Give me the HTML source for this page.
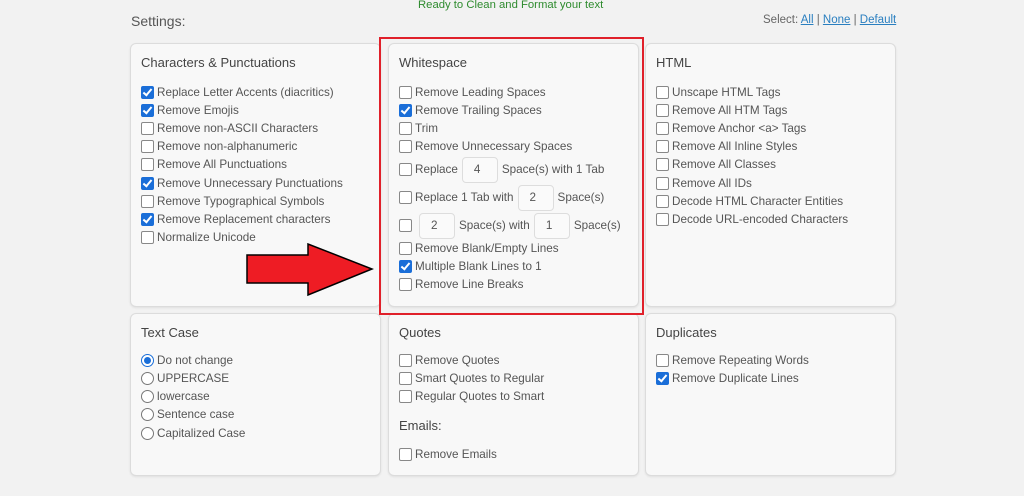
<!DOCTYPE html>
<html><head><meta charset="utf-8"><style>
body{margin:0;width:1024px;height:496px;background:#f2f2f2;font-family:"Liberation Sans",sans-serif;color:#555;position:relative;overflow:hidden}
.a{position:absolute;white-space:nowrap}
.p{position:absolute;background:#f8f8f8;border:1px solid #dcdcdc;border-radius:6px;box-shadow:0 1px 2px rgba(0,0,0,.08)}
.t{position:absolute;font-size:13px;color:#444}
.i{position:absolute;font-size:11.7px;color:#555;white-space:nowrap;height:14px;line-height:14px}
.cb{display:inline-block;width:13px;height:13px;border:1px solid #888;border-radius:2px;background:#fff;vertical-align:-3px;margin-right:3px;box-sizing:border-box;position:relative}
.cb.on{background:#1a6ed8;border-color:#1a6ed8}
.cb.on:after{content:"";position:absolute;left:3px;top:0px;width:3px;height:7px;border:solid #fff;border-width:0 2px 2px 0;transform:rotate(40deg)}
.rd{display:inline-block;width:13px;height:13px;border:1px solid #777;border-radius:50%;background:#fff;vertical-align:-3px;margin-right:3px;box-sizing:border-box;position:relative}
.rd.on{border-color:#1a6ed8}
.rd.on:after{content:"";position:absolute;left:2px;top:2px;width:7px;height:7px;border-radius:50%;background:#1a6ed8}
.in{display:inline-block;width:36px;height:26px;border:1px solid #ddd;border-radius:4px;background:#fafafa;box-sizing:border-box;line-height:24px;padding-left:11px;vertical-align:middle;margin:0 4px}
a{color:#2a7fc0}
</style></head><body>
<div class="a" style="left:418px;top:-1px;font-size:11.3px;color:#2e8b2e">Ready to Clean and Format your text</div>
<div class="a" style="left:131px;top:13px;font-size:14px;color:#555">Settings:</div>
<div class="a" style="left:763px;top:14px;font-size:11.5px;color:#666">Select: <a style="text-decoration:underline">All</a> | <a style="text-decoration:underline">None</a> | <a style="text-decoration:underline">Default</a></div>

<div class="p" style="left:130px;top:43px;width:249px;height:262px"></div>
<div class="p" style="left:388px;top:43px;width:249px;height:262px"></div>
<div class="p" style="left:645px;top:43px;width:249px;height:262px"></div>
<div class="p" style="left:130px;top:313px;width:249px;height:161px"></div>
<div class="p" style="left:388px;top:313px;width:249px;height:161px"></div>
<div class="p" style="left:645px;top:313px;width:249px;height:161px"></div>
<div class="a" style="left:379px;top:37px;width:261px;height:274px;border:2px solid #e0202a"></div>

<div class="t" style="left:141px;top:55px">Characters &amp; Punctuations</div>
<div class="i" style="left:141px;top:86px"><span class="cb on"></span>Replace Letter Accents (diacritics)</div>
<div class="i" style="left:141px;top:104px"><span class="cb on"></span>Remove Emojis</div>
<div class="i" style="left:141px;top:122px"><span class="cb"></span>Remove non-ASCII Characters</div>
<div class="i" style="left:141px;top:140px"><span class="cb"></span>Remove non-alphanumeric</div>
<div class="i" style="left:141px;top:158px"><span class="cb"></span>Remove All Punctuations</div>
<div class="i" style="left:141px;top:177px"><span class="cb on"></span>Remove Unnecessary Punctuations</div>
<div class="i" style="left:141px;top:195px"><span class="cb"></span>Remove Typographical Symbols</div>
<div class="i" style="left:141px;top:213px"><span class="cb on"></span>Remove Replacement characters</div>
<div class="i" style="left:141px;top:231px"><span class="cb"></span>Normalize Unicode</div>

<div class="t" style="left:399px;top:55px">Whitespace</div>
<div class="i" style="left:399px;top:86px"><span class="cb"></span>Remove Leading Spaces</div>
<div class="i" style="left:399px;top:104px"><span class="cb on"></span>Remove Trailing Spaces</div>
<div class="i" style="left:399px;top:122px"><span class="cb"></span>Trim</div>
<div class="i" style="left:399px;top:140px"><span class="cb"></span>Remove Unnecessary Spaces</div>
<div class="i" style="left:399px;top:157px;height:26px;line-height:26px"><span class="cb"></span>Replace<span class="in">4</span>Space(s) with 1 Tab</div>
<div class="i" style="left:399px;top:185px;height:26px;line-height:26px"><span class="cb"></span>Replace 1 Tab with<span class="in">2</span>Space(s)</div>
<div class="i" style="left:399px;top:213px;height:26px;line-height:26px"><span class="cb"></span><span class="in">2</span>Space(s) with<span class="in">1</span>Space(s)</div>
<div class="i" style="left:399px;top:242px"><span class="cb"></span>Remove Blank/Empty Lines</div>
<div class="i" style="left:399px;top:260px"><span class="cb on"></span>Multiple Blank Lines to 1</div>
<div class="i" style="left:399px;top:278px"><span class="cb"></span>Remove Line Breaks</div>

<div class="t" style="left:656px;top:55px">HTML</div>
<div class="i" style="left:656px;top:86px"><span class="cb"></span>Unscape HTML Tags</div>
<div class="i" style="left:656px;top:104px"><span class="cb"></span>Remove All HTM Tags</div>
<div class="i" style="left:656px;top:122px"><span class="cb"></span>Remove Anchor &lt;a&gt; Tags</div>
<div class="i" style="left:656px;top:140px"><span class="cb"></span>Remove All Inline Styles</div>
<div class="i" style="left:656px;top:158px"><span class="cb"></span>Remove All Classes</div>
<div class="i" style="left:656px;top:177px"><span class="cb"></span>Remove All IDs</div>
<div class="i" style="left:656px;top:195px"><span class="cb"></span>Decode HTML Character Entities</div>
<div class="i" style="left:656px;top:213px"><span class="cb"></span>Decode URL-encoded Characters</div>

<div class="t" style="left:141px;top:325px">Text Case</div>
<div class="i" style="left:141px;top:354px"><span class="rd on"></span>Do not change</div>
<div class="i" style="left:141px;top:372px"><span class="rd"></span>UPPERCASE</div>
<div class="i" style="left:141px;top:390px"><span class="rd"></span>lowercase</div>
<div class="i" style="left:141px;top:408px"><span class="rd"></span>Sentence case</div>
<div class="i" style="left:141px;top:427px"><span class="rd"></span>Capitalized Case</div>

<div class="t" style="left:399px;top:325px">Quotes</div>
<div class="i" style="left:399px;top:354px"><span class="cb"></span>Remove Quotes</div>
<div class="i" style="left:399px;top:372px"><span class="cb"></span>Smart Quotes to Regular</div>
<div class="i" style="left:399px;top:390px"><span class="cb"></span>Regular Quotes to Smart</div>
<div class="t" style="left:399px;top:418px">Emails:</div>
<div class="i" style="left:399px;top:448px"><span class="cb"></span>Remove Emails</div>

<div class="t" style="left:656px;top:325px">Duplicates</div>
<div class="i" style="left:656px;top:354px"><span class="cb"></span>Remove Repeating Words</div>
<div class="i" style="left:656px;top:372px"><span class="cb on"></span>Remove Duplicate Lines</div>

<svg class="a" style="left:244px;top:243px" width="132" height="54" viewBox="0 0 132 54"><polygon points="3,12 64,12 64,1 128,26 64,52 64,40 3,40" fill="#ee1c24" stroke="#000" stroke-width="1.5"/></svg>
</body></html>
